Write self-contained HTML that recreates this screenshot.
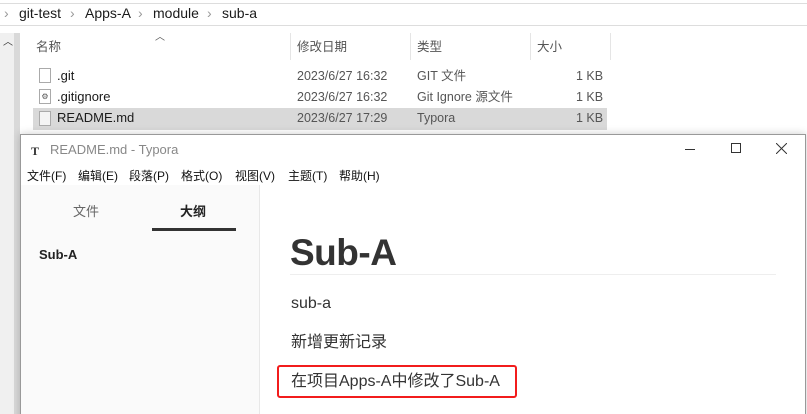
<!DOCTYPE html>
<html style="overflow:hidden;height:414px"><head><meta charset="utf-8"><style>
*{margin:0;padding:0;box-sizing:border-box}
body{width:807px;height:414px;overflow:hidden;background:#fff;font-family:"Liberation Sans","Noto Sans CJK SC",sans-serif;position:relative;color:#000}
.a{position:absolute;white-space:nowrap;line-height:16px}
.ex{font-size:12.5px;color:#1a1a1a}
.gr{color:#555}
.m{position:absolute;top:168px;font-size:12px;color:#111;line-height:16px}
</style></head><body>
<div class="a" style="left:0;top:3px;width:807px;height:1px;background:#ddd"></div>
<div class="a" style="left:0;top:25px;width:807px;height:1px;background:#ddd"></div>
<div class="a ex" style="left:4px;top:5px;font-size:14px;color:#999">›</div>
<div class="a ex" style="left:19px;top:5px;font-size:14px">git-test</div>
<div class="a ex" style="left:70px;top:5px;font-size:14px;color:#999">›</div>
<div class="a ex" style="left:85px;top:5px;font-size:14px">Apps-A</div>
<div class="a ex" style="left:138px;top:5px;font-size:14px;color:#999">›</div>
<div class="a ex" style="left:153px;top:5px;font-size:14px">module</div>
<div class="a ex" style="left:207px;top:5px;font-size:14px;color:#999">›</div>
<div class="a ex" style="left:222px;top:5px;font-size:14px">sub-a</div>
<div class="a" style="left:0;top:33px;width:14px;height:381px;background:#f0f0f0"></div>
<div class="a" style="left:14px;top:33px;width:6px;height:381px;background:#d9d9d9"></div>
<div class="a" style="left:3px;top:35px;font-size:10px;color:#333">︿</div>
<div class="a" style="left:155px;top:30px;font-size:10px;color:#555">︿</div>
<div class="a ex gr" style="left:36px;top:39px">名称</div>
<div class="a" style="left:290px;top:33px;width:1px;height:27px;background:#e5e5e5"></div>
<div class="a ex gr" style="left:297px;top:39px">修改日期</div>
<div class="a" style="left:410px;top:33px;width:1px;height:27px;background:#e5e5e5"></div>
<div class="a ex gr" style="left:417px;top:39px">类型</div>
<div class="a" style="left:530px;top:33px;width:1px;height:27px;background:#e5e5e5"></div>
<div class="a ex gr" style="left:537px;top:39px">大小</div>
<div class="a" style="left:610px;top:33px;width:1px;height:27px;background:#e5e5e5"></div>
<div class="a" style="left:33px;top:108px;width:574px;height:22px;background:#d9d9d9"></div>
<div class="a" style="left:39px;top:68px;width:12px;height:15px;border:1px solid #aaa;background:#fff"></div>
<div class="a" style="left:39px;top:89px;width:12px;height:15px;border:1px solid #aaa;background:#fff;font-size:8px;text-align:center;line-height:13px;color:#555">⚙</div>
<div class="a" style="left:39px;top:111px;width:12px;height:15px;border:1px solid #aaa;background:#f4f4f4"></div>
<div class="a ex" style="left:57px;top:68px;font-size:13px">.git</div>
<div class="a ex" style="left:57px;top:89px;font-size:13px">.gitignore</div>
<div class="a ex" style="left:57px;top:110px;font-size:13px">README.md</div>
<div class="a ex gr" style="left:297px;top:68px">2023/6/27 16:32</div>
<div class="a ex gr" style="left:297px;top:89px">2023/6/27 16:32</div>
<div class="a ex gr" style="left:297px;top:110px">2023/6/27 17:29</div>
<div class="a ex gr" style="left:417px;top:68px">GIT 文件</div>
<div class="a ex gr" style="left:417px;top:89px">Git Ignore 源文件</div>
<div class="a ex gr" style="left:417px;top:110px">Typora</div>
<div class="a ex gr" style="left:576px;top:68px">1 KB</div>
<div class="a ex gr" style="left:576px;top:89px">1 KB</div>
<div class="a ex gr" style="left:576px;top:110px">1 KB</div>

<div class="a" style="left:20px;top:134px;width:786px;height:290px;border:1px solid #999;background:#fff;box-shadow:0 0 8px rgba(0,0,0,.2)"></div>
<div class="a" style="left:31px;top:143px;font-family:'Liberation Serif',serif;font-weight:bold;font-size:12px;color:#333">T</div>
<div class="a" style="left:50px;top:142px;font-size:13px;color:#888">README.md - Typora</div>
<div class="a" style="left:685px;top:149px;width:10px;height:1px;background:#333"></div>
<div class="a" style="left:731px;top:143px;width:10px;height:10px;border:1px solid #333"></div>
<svg class="a" style="left:776px;top:143px" width="11" height="11"><path d="M0 0L11 11M11 0L0 11" stroke="#333" stroke-width="1"/></svg>
<div class="m" style="left:27px">文件(F)</div>
<div class="m" style="left:78px">编辑(E)</div>
<div class="m" style="left:129px">段落(P)</div>
<div class="m" style="left:181px">格式(O)</div>
<div class="m" style="left:235px">视图(V)</div>
<div class="m" style="left:288px">主题(T)</div>
<div class="m" style="left:339px">帮助(H)</div>
<div class="a" style="left:21px;top:185px;width:239px;height:229px;background:#fafafa;border-right:1px solid #e8e8e8"></div>
<div class="a" style="left:73px;top:204px;font-size:13px;color:#666">文件</div>
<div class="a" style="left:180px;top:204px;font-size:13px;color:#222;font-weight:bold">大纲</div>
<div class="a" style="left:152px;top:228px;width:84px;height:3px;background:#333"></div>
<div class="a" style="left:39px;top:247px;font-size:13px;font-weight:bold;color:#222">Sub-A</div>
<div class="a" style="left:290px;top:233px;font-size:37px;line-height:40px;font-weight:bold;color:#333;letter-spacing:-0.5px">Sub-A</div>
<div class="a" style="left:290px;top:274px;width:486px;height:1px;background:#eee"></div>
<div class="a" style="left:291px;top:294px;font-size:16px;line-height:20px;color:#333">sub-a</div>
<div class="a" style="left:291px;top:333px;font-size:16px;line-height:20px;color:#333">新增更新记录</div>
<div class="a" style="left:277px;top:365px;width:240px;height:33px;border:2px solid #f21c1c;border-radius:3px"></div>
<div class="a" style="left:291px;top:372px;font-size:16px;line-height:20px;color:#333">在项目Apps-A中修改了Sub-A</div>
</body></html>
